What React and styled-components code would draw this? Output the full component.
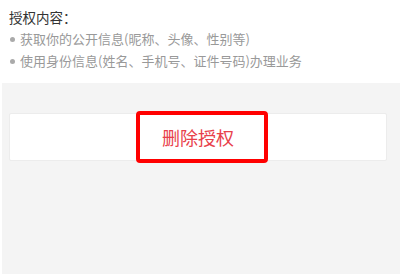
import React from 'react';
import styled, { createGlobalStyle } from 'styled-components';

const GlobalStyle = createGlobalStyle`
    body {
        margin: 0;
        background: #fff;
        font-family: "Noto Sans CJK SC", "Liberation Sans", sans-serif;
    }
`;

const Info = styled.div`
    padding: 6px 9px 0;
    margin-bottom: 11px;
    font-size: 13px;
    line-height: 22px;
`;

const Title = styled.div`
    color: #333;
    font-size: 13.5px;
`;

const Item = styled.div`
    display: flex;
    align-items: center;
    color: #999;

    &::before {
        content: '';
        width: 5px;
        height: 5px;
        border-radius: 50%;
        background: #aaa;
        margin: 0 5px 0 1px;
    }
`;

const Panel = styled.div`
    margin-left: 2px;
    height: 191px;
    background: #f4f4f4;
    padding: 30px 13px 0 7px;
    box-sizing: border-box;
`;

const Card = styled.div`
    position: relative;
    height: 48px;
    background: #fff;
    border: 1px solid #ececec;
    border-radius: 2px;
    box-sizing: border-box;
    display: flex;
    align-items: center;
    justify-content: center;
    color: #e8404a;
    font-size: 18px;
    cursor: pointer;
`;

const Highlight = styled.div`
    position: absolute;
    left: 126px;
    top: -3px;
    width: 132px;
    height: 52px;
    border: 4px solid #ff0000;
    border-radius: 4px;
    box-sizing: border-box;
`;

const App = () => (
    <>
        <GlobalStyle />
        <Info>
            <Title>授权内容：</Title>
            <Item>获取你的公开信息(昵称、头像、性别等)</Item>
            <Item>使用身份信息(姓名、手机号、证件号码)办理业务</Item>
        </Info>
        <Panel>
            <Card>
                删除授权
                <Highlight />
            </Card>
        </Panel>
    </>
);

export default App;
